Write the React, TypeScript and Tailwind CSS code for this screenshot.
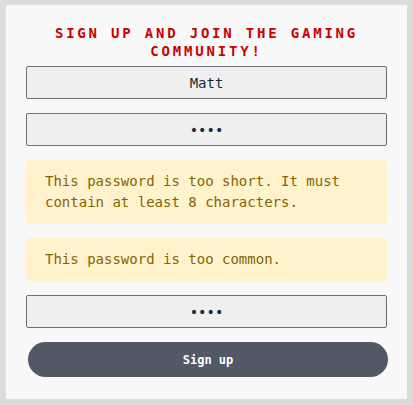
import React from 'react';

const mono = 'font-["DejaVu_Sans_Mono","Liberation_Mono",monospace]';

function Field({ value, type = 'text' }: { value: string; type?: string }): React.ReactElement {
  return (
    <input
      type={type}
      value={value}
      readOnly
      className={`h-[33px] w-full rounded-[2px] border border-[#6f6f7a] bg-[#efefef] text-center text-[14px] text-[#1e2a3a] outline-none ${mono}`}
    />
  );
}

function Alert({ children }: { children: React.ReactNode }): React.ReactElement {
  return (
    <div className="rounded-[4px] bg-[#fff3cd] px-[19px] py-[11px] text-[14px] leading-[21px] text-[#856404]">
      {children}
    </div>
  );
}

export default function App(): React.ReactElement {
  return (
    <div className={`min-h-[405px] w-full bg-[#dcdcdc] px-[6px] pt-[5px] pb-[6px] ${mono}`}>
      <div className="flex flex-col gap-[14px] bg-[#f8f8f8] px-[20px] pt-[20px] pb-[22px]">
        <h1 className="-mb-[8px] text-center text-[14px] leading-[17.5px] font-bold tracking-[0.2em] text-[#cc0000] uppercase">
          Sign up and join the gaming community!
        </h1>
        <Field value="Matt" />
        <Field value="abcd" type="password" />
        <Alert>This password is too short. It must contain at least 8 characters.</Alert>
        <Alert>This password is too common.</Alert>
        <Field value="abcd" type="password" />
        <button
          type="button"
          className="ml-[2px] h-[35px] w-[360px] rounded-full bg-[#525866] text-[12px] font-bold text-white"
        >
          Sign up
        </button>
      </div>
    </div>
  );
}
